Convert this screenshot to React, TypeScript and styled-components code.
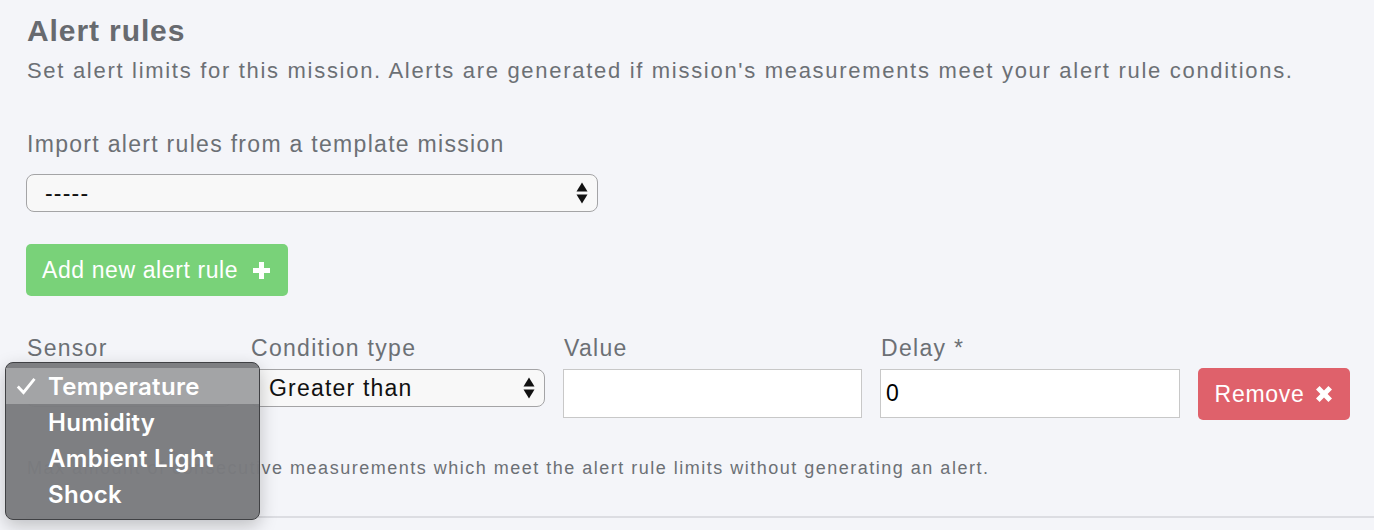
import React from 'react';
import styled, { createGlobalStyle } from 'styled-components';

const GlobalStyle = createGlobalStyle`
  html, body {
    margin: 0;
    padding: 0;
    background: #f4f5f9;
  }
  body {
    font-family: "Liberation Sans", Arial, sans-serif;
  }
`;

const Page = styled.div`
  padding: 14px 0 0 26px;
  min-height: 530px;
  box-sizing: border-box;
  overflow: hidden;
`;

const Heading = styled.h2`
  margin: 0 0 0 1px;
  font-size: 30px;
  line-height: 34px;
  font-weight: 700;
  letter-spacing: 0.9px;
  color: #676a6f;
`;

const Lead = styled.p`
  margin: 10px 0 0 1px;
  font-size: 22px;
  line-height: 26px;
  letter-spacing: 1.7px;
  color: #6c7075;
  white-space: nowrap;
`;

const Label = styled.label`
  display: block;
  font-size: 23px;
  line-height: 26px;
  letter-spacing: 1.3px;
  color: #6c7075;
  margin-left: 1px;
  white-space: nowrap;
`;

const ImportGroup = styled.div`
  margin-top: 47px;
  display: flex;
  flex-direction: column;
  gap: 17px;
`;

const SelectBox = styled.div<{ $width: number }>`
  width: ${(p) => p.$width}px;
  height: 38px;
  box-sizing: border-box;
  border: 1px solid #a4a4a6;
  border-radius: 8px;
  background: #f8f8f8;
  display: flex;
  align-items: center;
  justify-content: space-between;
  padding: 0 9px 0 18px;
  font-size: 23px;
  letter-spacing: 1.2px;
  color: #111;
`;

const Arrows = () => (
  <svg width="12" height="24" viewBox="0 0 12 24">
    <path d="M6 1.5 L11.5 10.5 H0.5 Z" fill="#111" />
    <path d="M6 22.5 L11.5 13.5 H0.5 Z" fill="#111" />
  </svg>
);

const AddButton = styled.button`
  margin-top: 32px;
  display: inline-flex;
  align-items: center;
  gap: 15px;
  height: 52px;
  padding: 0 18px 0 16px;
  border: none;
  border-radius: 5px;
  background: #79d279;
  color: #fff;
  font-family: inherit;
  font-size: 23px;
  letter-spacing: 0.6px;
  cursor: pointer;
`;

const RuleRow = styled.div`
  margin-top: 39px;
  display: flex;
  align-items: flex-start;
`;

const Field = styled.div<{ $width: number; $gap: number }>`
  position: relative;
  width: ${(p) => p.$width}px;
  margin-right: ${(p) => p.$gap}px;
  display: flex;
  flex-direction: column;
  gap: 8px;
`;

const TextInput = styled.div`
  height: 49px;
  box-sizing: border-box;
  border: 1px solid #c8c8c8;
  background: #fff;
  display: flex;
  align-items: center;
  padding: 0 5px;
  font-size: 23px;
  color: #000;
`;

const RemoveButton = styled.button`
  margin-top: 33px;
  display: inline-flex;
  align-items: center;
  gap: 11px;
  height: 52px;
  width: 152px;
  padding: 0;
  justify-content: center;
  border: none;
  border-radius: 5px;
  background: #df616b;
  color: #fff;
  font-family: inherit;
  font-size: 23px;
  letter-spacing: 0.7px;
  cursor: pointer;
`;

const Help = styled.p`
  margin: 37px 0 0 1px;
  font-size: 18px;
  line-height: 22px;
  letter-spacing: 1.5px;
  color: #6c7075;
  white-space: nowrap;
`;

const Divider = styled.hr`
  margin: 37px 0 0 0;
  border: none;
  border-top: 2px solid #dcdde2;
`;

const Menu = styled.ul`
  position: absolute;
  left: -21px;
  top: 27px;
  width: 255px;
  margin: 0;
  padding: 5px 0 7px;
  list-style: none;
  box-sizing: border-box;
  background: rgba(122, 123, 126, 0.97);
  border: 1px solid #404144;
  border-radius: 8px;
  box-shadow: 0 6px 18px rgba(0, 0, 0, 0.22);
  z-index: 5;
`;

const MenuItem = styled.li<{ $active?: boolean }>`
  display: flex;
  align-items: center;
  height: 36px;
  padding-left: 10px;
  background: ${(p) => (p.$active ? '#a3a4a6' : 'transparent')};
  color: #fff;
  font-family: Inter, "Liberation Sans", Arial, sans-serif;
  font-size: 24px;
  font-weight: 600;
  letter-spacing: 0.3px;
`;

const CheckSlot = styled.span`
  width: 32px;
  height: 20px;
  display: flex;
  align-items: center;
`;

const CheckIcon = () => (
  <svg width="20" height="18" viewBox="0 0 20 18">
    <path d="M1.8 9.5 L7.5 15.5 L18.5 1.8" fill="none" stroke="#fff" strokeWidth="2.8" />
  </svg>
);

const PlusIcon = () => (
  <svg width="17" height="17" viewBox="0 0 17 17">
    <path d="M6 0 H11 V6 H17 V11 H11 V17 H6 V11 H0 V6 H6 Z" fill="#fff" />
  </svg>
);

const TimesIcon = () => (
  <svg width="18" height="18" viewBox="0 0 18 18">
    <path
      d="M1 4.6 L4.6 1 L9 5.4 L13.4 1 L17 4.6 L12.6 9 L17 13.4 L13.4 17 L9 12.6 L4.6 17 L1 13.4 L5.4 9 Z"
      fill="#fff"
    />
  </svg>
);

const sensors = ['Temperature', 'Humidity', 'Ambient Light', 'Shock'];

export default function App() {
  return (
    <Page>
      <GlobalStyle />
      <Heading>Alert rules</Heading>
      <Lead>
        Set alert limits for this mission. Alerts are generated if mission's measurements meet your
        alert rule conditions.
      </Lead>

      <ImportGroup>
        <Label>Import alert rules from a template mission</Label>
        <SelectBox $width={572}>
          <span>-----</span>
          <Arrows />
        </SelectBox>
      </ImportGroup>

      <AddButton>
        Add new alert rule
        <PlusIcon />
      </AddButton>

      <RuleRow>
        <Field $width={206} $gap={18}>
          <Label>Sensor</Label>
          <SelectBox $width={206}>
            <span>Temperature</span>
            <Arrows />
          </SelectBox>
          <Menu>
            {sensors.map((s, i) => (
              <MenuItem key={s} $active={i === 0}>
                <CheckSlot>{i === 0 && <CheckIcon />}</CheckSlot>
                {s}
              </MenuItem>
            ))}
          </Menu>
        </Field>
        <Field $width={295} $gap={18}>
          <Label>Condition type</Label>
          <SelectBox $width={295}>
            <span>Greater than</span>
            <Arrows />
          </SelectBox>
        </Field>
        <Field $width={299} $gap={18}>
          <Label>Value</Label>
          <TextInput />
        </Field>
        <Field $width={300} $gap={18}>
          <Label>Delay *</Label>
          <TextInput>0</TextInput>
        </Field>
        <RemoveButton>
          Remove
          <TimesIcon />
        </RemoveButton>
      </RuleRow>

      <Help>
        Max amount of consecutive measurements which meet the alert rule limits without generating
        an alert.
      </Help>
      <Divider />
    </Page>
  );
}
